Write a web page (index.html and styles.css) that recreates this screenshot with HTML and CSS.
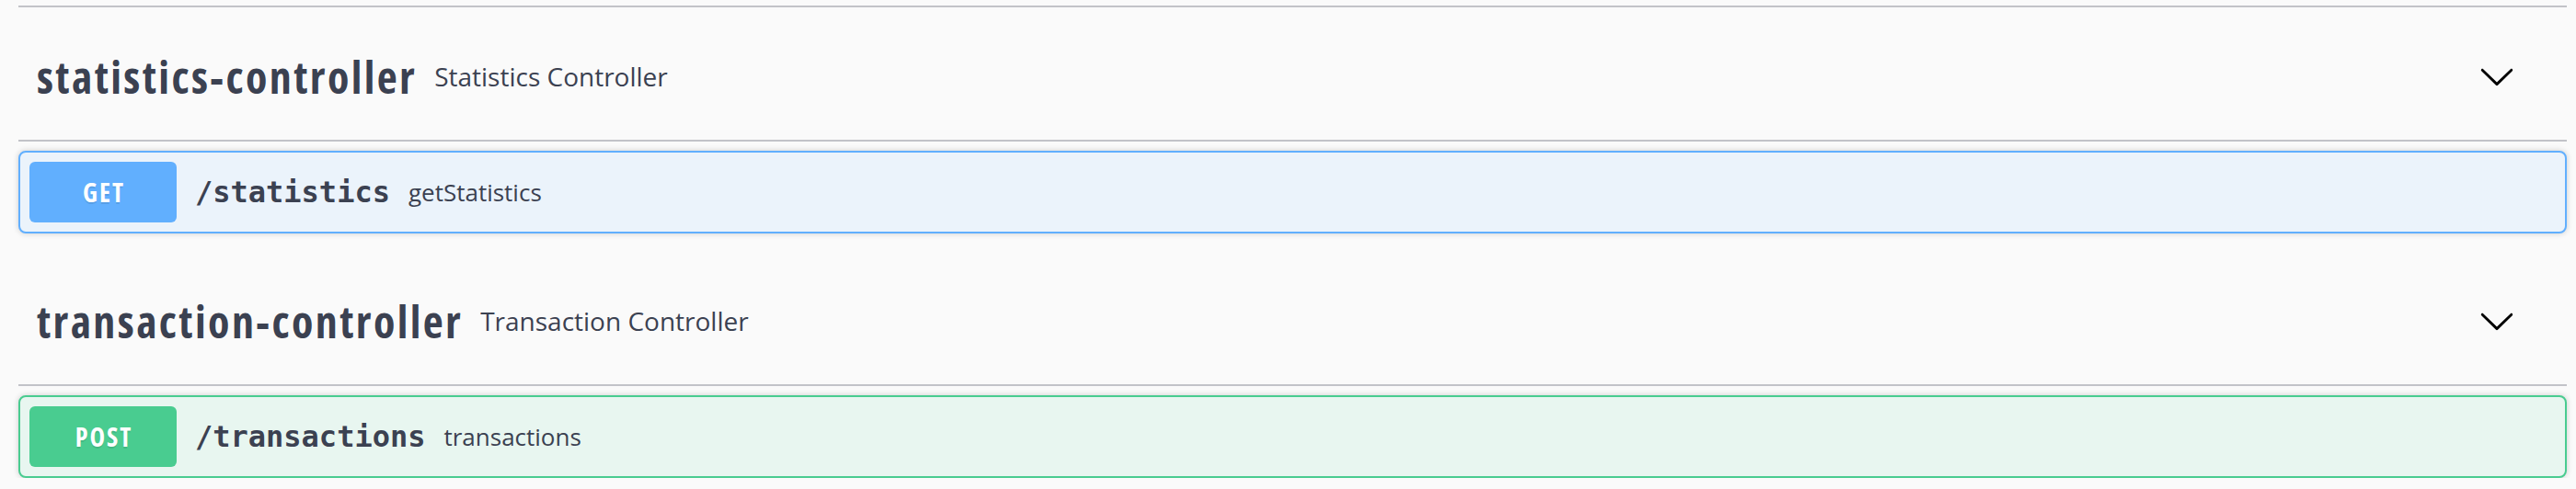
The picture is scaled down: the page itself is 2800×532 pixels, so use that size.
FILE: index.html
```html
<!DOCTYPE html>
<html lang="en">
<head>
<meta charset="utf-8">
<title>Swagger UI</title>
<link rel="stylesheet" href="styles.css">
</head>
<body>
<div class="wrapper">
  <div class="top-rule"></div>

  <section class="tag-section">
    <h4 class="tag-header">
      <span class="tag-name">statistics-controller</span>
      <small class="tag-desc">Statistics Controller</small>
      <span class="tag-spacer"></span>
      <button class="expand" aria-label="expand">
        <svg width="40" height="40" viewBox="0 0 20 20"><path d="M17.418 6.109c.272-.268.709-.268.979 0s.271.701 0 .969l-7.908 7.83c-.27.268-.707.268-.979 0l-7.908-7.830c-.27-.268-.27-.701 0-.969.271-.268.709-.268.979 0L10 13.25l7.418-7.141z"/></svg>
      </button>
    </h4>
    <div class="opblock opblock-get">
      <div class="opblock-summary">
        <span class="method">GET</span>
        <span class="path">/statistics</span>
        <span class="desc">getStatistics</span>
      </div>
    </div>
  </section>

  <section class="tag-section">
    <h4 class="tag-header">
      <span class="tag-name">transaction-controller</span>
      <small class="tag-desc">Transaction Controller</small>
      <span class="tag-spacer"></span>
      <button class="expand" aria-label="expand">
        <svg width="40" height="40" viewBox="0 0 20 20"><path d="M17.418 6.109c.272-.268.709-.268.979 0s.271.701 0 .969l-7.908 7.83c-.27.268-.707.268-.979 0l-7.908-7.830c-.27-.268-.27-.701 0-.969.271-.268.709-.268.979 0L10 13.25l7.418-7.141z"/></svg>
      </button>
    </h4>
    <div class="opblock opblock-post">
      <div class="opblock-summary">
        <span class="method">POST</span>
        <span class="path">/transactions</span>
        <span class="desc">transactions</span>
      </div>
    </div>
  </section>
</div>
</body>
</html>
```
FILE: styles.css
```css
html, body {
  margin: 0;
  padding: 0;
  background: #fafafa;
}

body {
  font-family: "Open Sans", "DejaVu Sans", sans-serif;
  color: #3b4151;
}

.wrapper {
  width: 2770px;
  padding-left: 20px;
}

.top-rule {
  height: 6px;
  border-bottom: 2px solid #c2c3c8;
}

.tag-section + .tag-section {
  margin-top: 20px;
}

.tag-header {
  margin: 0;
  box-sizing: border-box;
  height: 146px;
  padding: 6px 56px 0 20px;
  display: flex;
  align-items: center;
  border-bottom: 2px solid #c2c3c8;
  font-weight: 400;
}

.tag-name {
  font-size: 48px;
  font-weight: 700;
  font-stretch: 87.5%;
  letter-spacing: 2.4px;
  color: #3b4151;
  line-height: 1.36;
  position: relative;
  top: 1px;
}

.tag-desc {
  font-size: 28px;
  font-weight: 400;
  padding: 0 19px;
  color: #3b4151;
}

.tag-spacer {
  flex: 1;
}

.expand {
  border: none;
  background: none;
  padding: 0;
  margin: 0;
  width: 40px;
  height: 40px;
  display: flex;
}

.expand svg {
  fill: #000;
}

.opblock {
  margin-top: 10px;
  border: 2px solid #000;
  border-radius: 8px;
  box-shadow: 0 0 6px rgba(0, 0, 0, 0.19);
}

.opblock-get {
  background: #ebf3fb;
  border-color: #61affe;
}

.opblock-post {
  background: #e8f6f0;
  border-color: #49cc90;
}

.opblock-summary {
  display: flex;
  align-items: center;
  padding: 10px;
}

.method {
  box-sizing: border-box;
  min-width: 160px;
  height: 66px;
  padding: 12px 30px;
  border-radius: 6px;
  font-size: 28px;
  font-stretch: 87.5%;
  letter-spacing: 2px;
  text-indent: 2px;
  line-height: 42px;
  font-weight: 700;
  color: #fff;
  text-align: center;
  text-shadow: 0 2px 0 rgba(0, 0, 0, 0.1);
}

.opblock-get .method {
  background: #61affe;
}

.opblock-post .method {
  background: #49cc90;
}

.path {
  padding: 0 20px;
  font-family: "DejaVu Sans Mono", "Liberation Mono", monospace;
  font-size: 32px;
  font-weight: 700;
  color: #3b4151;
}

.desc {
  font-size: 26px;
  color: #3b4151;
}
```
